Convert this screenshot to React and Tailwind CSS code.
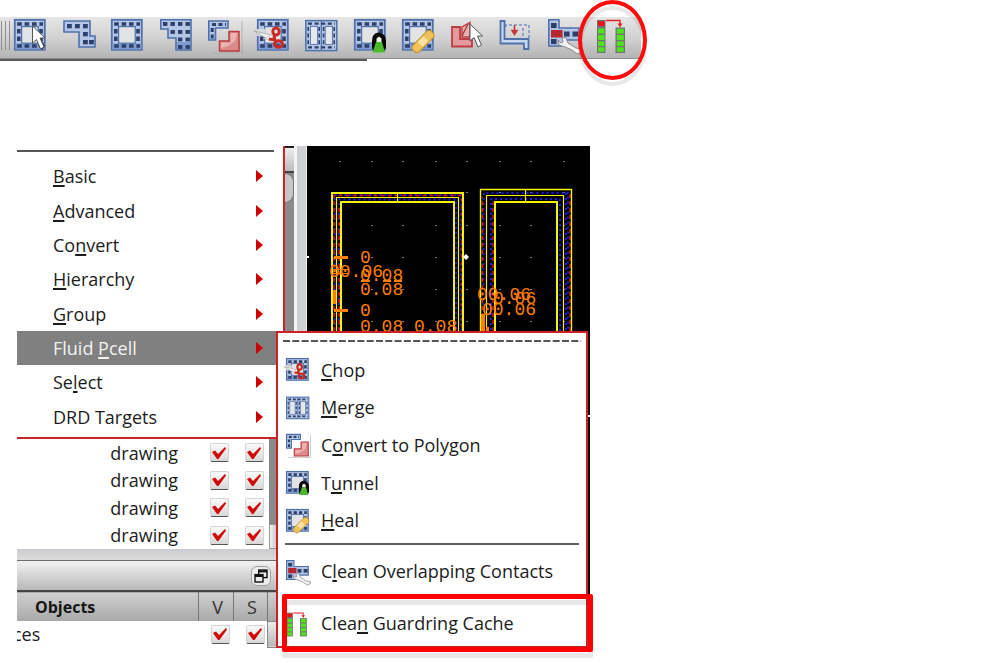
const EDGE = "#4f70ab";
const FILL = "#b4c5e6";
const DARK = "#2c4069";

function Icon({ className = "size-8", children }) {
  return (
    <svg viewBox="0 0 32 32" className={className + " block overflow-visible"} aria-hidden="true">
      {children}
    </svg>
  );
}

function Squares({ points, size = 4.5 }) {
  return points.map(([x, y]) => (
    <rect key={x + "-" + y} x={x} y={y} width={size} height={size - 0.5} fill={DARK} />
  ));
}

function Ring({ hole = "#e2e3e5" }) {
  return (
    <g>
      <rect x="0.8" y="0.8" width="30" height="30" fill={FILL} stroke={EDGE} strokeWidth="1.8" />
      <path d="M1.5 24.5H30.5V30.5H1.5Z" fill="#7f9bd0" />
      <g stroke={DARK} strokeWidth="3.6" strokeDasharray="4.6 2.8" fill="none">
        <path d="M3.2 5H29M3.2 27H29" />
        <path d="M4.8 10V23M27 10V23" />
      </g>
      <rect x="7.6" y="7.6" width="16.6" height="16.6" fill={hole} stroke={EDGE} strokeWidth="1.2" />
    </g>
  );
}

function Pointer({ x, y }) {
  return (
    <path
      transform={`translate(${x} ${y})`}
      d="M0 0V17L4 13.5L8 23L11.5 21L7.5 12H12.5Z"
      fill="#fff"
      stroke="#555"
      strokeWidth="1"
    />
  );
}

const SelectIcon = (p) => (
  <Icon {...p}>
    <Ring />
    <path d="M24 26L28 31L31 27L27 20Z" fill="#222" />
    <Pointer x={18.5} y={7} />
  </Icon>
);

const PathIcon = (p) => (
  <Icon {...p}>
    <path d="M1 2H27V17H32V28H16V13H1Z" fill={FILL} stroke={EDGE} strokeWidth="1.6" />
    <Squares points={[[4, 5], [12, 5], [20, 5], [20, 13], [20, 21], [26, 21]]} size={4.8} />
  </Icon>
);

const RingIcon = (p) => (
  <Icon {...p}>
    <Ring />
  </Icon>
);

const PolygonIcon = (p) => (
  <Icon {...p}>
    <path d="M0.8 0.8H31V31H16V19H8V10H0.8Z" fill={FILL} stroke={EDGE} strokeWidth="1.6" />
    <path d="M17 23H30V30H17Z" fill="#7f9bd0" />
    <Squares
      points={[[3, 3], [10.5, 3], [18, 3], [25.5, 3], [10.5, 11], [18, 11], [25.5, 11], [18, 18.5], [25.5, 18.5], [18, 26], [25.5, 26]]}
      size={4.4}
    />
  </Icon>
);

const ConvertIcon = (p) => (
  <Icon {...p}>
    <path d="M3 34H34V2" stroke="#a9a9a9" strokeWidth="0.8" fill="none" />
    <path d="M0.8 2H20V9H7.5V21H0.8Z" fill={FILL} stroke={EDGE} strokeWidth="1.6" />
    <path d="M4 5.4H18M4.2 9V20" stroke={DARK} strokeWidth="3" strokeDasharray="4 2.5" />
    <path d="M11.5 22H21V12.5H31V32H11.5Z" fill="#dd8a8a" stroke="#b93c42" strokeWidth="1.5" />
    <path d="M13 23.5H22.5V14H29.5L27 22L20 27L13 29Z" fill="#f3c3c3" opacity="0.7" />
  </Icon>
);

const ChopIcon = (p) => (
  <Icon {...p}>
    <Ring />
    <path d="M0 10H8V17H0Z" fill="#dadada" />
    <path d="M-3 12L14 16L18 21L12 21Z" fill="#f5f5f5" stroke="#999" strokeWidth="0.7" />
    <path d="M6 20L17 15L15 20Z" fill="#fff" stroke="#aaa" strokeWidth="0.6" />
    <g fill="none" stroke="#cc2a22" strokeWidth="3">
      <ellipse cx="19" cy="12.5" rx="3.2" ry="3.6" />
      <ellipse cx="21.5" cy="25" rx="4" ry="3.2" />
      <path d="M17 16L18 22M12 20L19 21" />
    </g>
  </Icon>
);

const MergeIcon = (p) => (
  <Icon {...p}>
    <rect x="0.8" y="1.6" width="31" height="30" fill={FILL} stroke={EDGE} strokeWidth="1.5" />
    <path d="M16.3 2V31" stroke={EDGE} strokeWidth="1.2" />
    <g stroke={DARK} strokeWidth="2.4" strokeDasharray="4 2.6">
      <path d="M3 4.6H30M3 28.4H30" />
      <path d="M3.2 8V26M14.2 8V26M18.6 8V26M29.2 8V26" strokeWidth="1.6" />
    </g>
    <rect x="5.4" y="7.4" width="7.2" height="18" fill="#e6e7ea" stroke={EDGE} strokeWidth="0.9" />
    <rect x="20.2" y="7.4" width="7.2" height="18" fill="#e6e7ea" stroke={EDGE} strokeWidth="0.9" />
  </Icon>
);

const TunnelIcon = (p) => (
  <Icon {...p}>
    <Ring />
    <path d="M18 29V22Q18 14 24.5 13.5Q32 14 32 22V29L29 33H20Z" fill="#050505" />
    <path d="M22.5 19.5L25 17.5L27.5 19.5V23H22.5Z" fill="#e8f4e0" />
    <path d="M22 23H28L31 33.5H18.5Z" fill="#4cb82c" />
  </Icon>
);

const HealIcon = (p) => (
  <Icon {...p}>
    <Ring />
    <g transform="rotate(-45 21 22.5)">
      <rect x="8" y="18" width="26" height="9" rx="3.5" fill="#f0c25a" stroke="#c4912c" strokeWidth="1" />
      <rect x="17" y="19" width="8" height="7" fill="#f9e0a6" />
    </g>
  </Icon>
);

const ReshapeIcon = (p) => (
  <Icon {...p}>
    <path d="M1 8H9V20H21V27.5H1Z" fill="#e29a9c" stroke="#bd3d44" strokeWidth="1.8" />
    <path d="M11 18V8L19 3.5V18Z" fill="#e6b4b5" stroke="#bd3d44" strokeWidth="1.4" />
    <path d="M11 17L17 5" stroke="#a83038" strokeWidth="1.2" />
    <Pointer x={19} y={5} />
  </Icon>
);

const StretchIcon = (p) => (
  <Icon {...p}>
    <path d="M7 8V6H30V21" fill="none" stroke="#7896c8" strokeWidth="1.6" strokeDasharray="3 2" />
    <path d="M24 9V21" stroke="#7896c8" strokeWidth="1.6" strokeDasharray="3 2" />
    <path d="M1.5 2H5.5V20H29.5V30H25V24.5H1.5Z" fill="#c9d7ef" stroke={EDGE} strokeWidth="1.8" />
    <path d="M15.5 6V12M13 11.5H18L15.5 15.5Z" fill="#c4393f" stroke="#c4393f" strokeWidth="1.6" />
  </Icon>
);

const ContactsIcon = (p) => (
  <Icon {...p}>
    <path d="M0.8 0.8H11V9H31V21H18V27H0.8Z" fill={FILL} stroke={EDGE} strokeWidth="1.6" />
    <Squares points={[[3, 4], [16, 12.5], [24.5, 12.5], [3, 20]]} size={5.6} />
    <rect x="3" y="11" width="11.5" height="7.5" fill="#b5262d" />
    <path
      d="M10 21L13 24L15 23L14 18.5L18 19L20 24L28 29L34 30V33L29 35L24 31L17 28L11 26Z"
      fill="#f1f1f1"
      stroke="#8b8b8b"
      strokeWidth="1"
    />
  </Icon>
);

const CacheIcon = (p) => (
  <Icon {...p}>
    <rect x="1" y="1" width="8.5" height="33" fill="#6f7472" />
    <rect x="19.5" y="8.5" width="9.5" height="25.5" fill="#6f7472" />
    <rect x="2" y="2.2" width="6.5" height="4.8" fill="#ea1212" />
    <g fill="#4fe31c">
      <rect x="2" y="9.5" width="6.5" height="5" />
      <rect x="2" y="16" width="6.5" height="5" />
      <rect x="2" y="22.3" width="6.5" height="4.6" />
      <rect x="2" y="28.2" width="6.5" height="4.6" />
      <rect x="20.8" y="9.8" width="7" height="4.8" />
      <rect x="20.8" y="16" width="7" height="5" />
      <rect x="20.8" y="22.3" width="7" height="4.6" />
      <rect x="20.8" y="28.2" width="7" height="4.6" />
    </g>
    <path d="M10 1.5H24V5" fill="none" stroke="#e02222" strokeWidth="1.4" />
    <path d="M21.5 4.5H26.5L24 8.5Z" fill="#e02222" />
  </Icon>
);

const tools = [
  ["Select", SelectIcon],
  ["Path", PathIcon],
  ["Ring", RingIcon],
  ["Polygon", PolygonIcon],
  ["Convert to Polygon", ConvertIcon],
  ["Chop", ChopIcon],
  ["Merge", MergeIcon],
  ["Tunnel", TunnelIcon],
  ["Heal", HealIcon],
  ["Reshape", ReshapeIcon],
  ["Stretch", StretchIcon],
  ["Clean Overlapping Contacts", ContactsIcon],
  ["Clean Guardring Cache", CacheIcon],
];

function Toolbar() {
  return (
    <header className="relative mt-[17px] w-[641px]">
      <div className="flex h-[42px] items-start border-b border-[#8c8c8c] bg-linear-to-b from-[#e6e6e6] via-[#d2d2d2] to-[#b4b4b4] pt-0.5">
        <div className="mt-0.5 flex h-[29px] w-[14px] shrink-0 gap-[3px] pl-px">
          <span className="w-px bg-[#8f8f8f]" />
          <span className="w-px bg-[#8f8f8f]" />
          <span className="w-px bg-[#8f8f8f]" />
        </div>
        <div className="mr-[13px] flex flex-1 justify-between">
          {tools.map(([name, Glyph]) => (
            <button key={name} type="button" aria-label={name} className="block">
              <Glyph />
            </button>
          ))}
        </div>
      </div>
      <div className="h-0.5 w-[367px] bg-[#5a5a5a]" />
      <div className="absolute -top-[17px] left-[578px] h-20 w-[69px] rounded-[50%] border-4 border-[#fb0d0d] drop-shadow-[0_6px_0_rgba(0,0,0,0.09)]" />
    </header>
  );
}

function Mnemonic({ text, at }) {
  if (at < 0) return <span>{text}</span>;
  return (
    <span className="whitespace-nowrap">
      {text.slice(0, at)}
      <span className="underline decoration-2 underline-offset-2 [text-decoration-skip-ink:none]">{text[at]}</span>
      {text.slice(at + 1)}
    </span>
  );
}

const menuItems = [
  ["Basic", 0],
  ["Advanced", 0],
  ["Convert", 2],
  ["Hierarchy", 0],
  ["Group", 0],
  ["Fluid Pcell", 6],
  ["Select", 2],
  ["DRD Targets", -1],
];

function EditMenu() {
  return (
    <nav className="w-[268px] border-r-2 border-b-2 border-[#cc2229] bg-white pt-1">
      <hr className="mr-[9px] border-t-2 border-[#555]" />
      <ul className="mt-[7px] mb-[3px] grid h-[275px] grid-rows-8">
        {menuItems.map(([text, at]) => (
          <li key={text}>
            <button
              type="button"
              className={
                "flex h-full w-full items-center justify-between pr-5 pl-9 text-left " +
                (text === "Fluid Pcell" ? "bg-[#808080] text-[#f2f2f2]" : "text-[#1c1c1c]")
              }
            >
              <Mnemonic text={text} at={at} />
              <svg viewBox="0 0 7 12" className="h-3 w-[7px]" aria-hidden="true">
                <path d="M0 0L7 6L0 12Z" fill="#cc0000" />
              </svg>
            </button>
          </li>
        ))}
      </ul>
    </nav>
  );
}

function Check({ label }) {
  return (
    <span className="grid size-5 place-items-center">
      <input
        type="checkbox"
        aria-label={label}
        defaultChecked
        className="peer col-start-1 row-start-1 size-[19px] appearance-none rounded-xs border border-[#d4d4d4] border-b-[#555] bg-linear-to-b from-[#fafafa] to-[#d8d8d8]"
      />
      <svg
        viewBox="0 0 14 12"
        className="pointer-events-none invisible col-start-1 row-start-1 h-3 w-[14px] peer-checked:visible"
        aria-hidden="true"
      >
        <path d="M0 5L3 3.5L6 7L13 0L14 1.5L6.5 12H5Z" fill="#d00808" />
      </svg>
    </span>
  );
}

function LayerPanel() {
  return (
    <div className="flex h-[110px] w-[260px] bg-white">
      <table className="w-[252px] table-fixed border-collapse">
        <tbody>
          {[0, 1, 2, 3].map((row) => (
            <tr key={row} className="h-[27px]">
              <td className="p-0 pr-[9px] text-right leading-[26px]">drawing</td>
              <td className="w-[46px] p-0 pl-[22px]">
                <Check label={`Layer ${row + 1} visible`} />
              </td>
              <td className="w-9 p-0 pl-[11px]">
                <Check label={`Layer ${row + 1} selectable`} />
              </td>
            </tr>
          ))}
        </tbody>
      </table>
      <div className="flex flex-1 flex-col">
        <div className="flex-1 bg-[#8a8a8a]" />
        <div className="h-[25px] border border-r-0 border-[#999] bg-linear-to-r from-[#f0f0f0] to-[#c4c4c4]" />
      </div>
    </div>
  );
}

function ObjectsPanel() {
  return (
    <div className="w-[260px]">
      <div className="h-[12px] border-b border-[#6d6d6d] bg-linear-to-b from-[#c9cbcf] to-[#dcdcdc]" />
      <div className="flex h-[29px] items-center justify-end bg-linear-to-b from-[#f2f2f2] to-[#b9b9b9] pr-1.5">
        <button
          type="button"
          aria-label="Float panel"
          className="grid size-5 place-items-center rounded-md border border-[#a0a0a0] bg-[#ececec]"
        >
          <svg viewBox="0 0 14 14" className="size-[14px]" aria-hidden="true">
            <g fill="#ececec" stroke="#111" strokeWidth="1.4">
              <rect x="4.7" y="1" width="8.3" height="7.6" />
              <path d="M4.7 2.4H13" strokeWidth="2" />
              <rect x="1" y="5.6" width="8" height="7.4" />
              <path d="M1 7H9" strokeWidth="2" />
            </g>
          </svg>
        </button>
      </div>
      <table className="w-[260px] table-fixed border-collapse">
        <thead>
          <tr className="h-[30px] border-t-2 border-[#444] bg-linear-to-b from-[#cfcfcf] to-[#a9a9a9]">
            <th className="border-r border-[#777] p-0 pl-[18px] text-left text-base leading-6 font-bold text-[#151515]">
              Objects
            </th>
            <th className="w-[35px] border-r border-[#777] p-0 pl-1 leading-6 font-normal text-[#333]">V</th>
            <th className="w-[34px] border-r border-[#777] p-0 pl-1 leading-6 font-normal text-[#333]">S</th>
            <th className="w-[10px] p-0" />
          </tr>
        </thead>
        <tbody>
          <tr className="h-[26px]">
            <td className="p-0 leading-[25px]">
              <span className="flex w-[70px] overflow-hidden">
                <span className="-ml-1">ces</span>
              </span>
            </td>
            <td className="p-0 pl-3">
              <Check label="Instances visible" />
            </td>
            <td className="p-0 pl-3">
              <Check label="Instances selectable" />
            </td>
            <td className="border border-r-0 border-[#888] bg-linear-to-b from-[#eee] to-[#b5b5b5] p-0" />
          </tr>
        </tbody>
      </table>
    </div>
  );
}

function ScrollStrip() {
  return (
    <div className="flex h-[190px] w-[22px] shrink-0">
      <div className="w-[9px] bg-[#8a8a8a]">
        <div className="h-[27px] border-y-2 border-t-[#222] border-b-[#444] bg-linear-to-b from-[#eee] to-[#bbb]" />
        <div className="h-[30px] rounded-r-full border border-l-0 border-[#777] bg-[#c6c6c6]" />
      </div>
      <div className="w-[3px] bg-[#f4f4f4]" />
      <div className="flex-1 border-r border-[#eee] bg-[#cfd0d3]" />
    </div>
  );
}

const gridX = [339, 371, 402, 435, 466, 499, 530, 563];
const gridY = [161, 192, 225, 257, 289, 321];

function LayoutCanvas() {
  return (
    <svg
      viewBox="307 146 283 502"
      className="block h-[502px] w-[283px] shrink-0 bg-black"
      role="img"
      aria-label="Layout canvas with two guard rings"
    >
      {gridY.map((y) =>
        gridX.map((x) => <rect key={x + "-" + y} x={x} y={y} width="2" height="1" fill="#7d7f90" />),
      )}
      <g fill="none" strokeWidth="2" stroke="#1a1ae6" strokeDasharray="2 3">
        <path d="M334.5 345V195H461V345M339 345V199.5H456V345" />
        <path d="M483.5 345V193H568V345M491 345V199H560V345M566 345V193" />
      </g>
      <g fill="none" stroke="#e01414" strokeDasharray="4 3" strokeWidth="1.4">
        <path d="M334 345V195.5H462V345M339.3 345V205" />
        <path d="M482.5 345V197M570 345V193M493 345V202" />
      </g>
      <g fill="none" stroke="#f4f400">
        <path d="M332 345V193H463V345" strokeWidth="2" />
        <path d="M336.5 345V197.5H458.5V345M397.5 192V202" strokeWidth="1.2" />
        <path d="M341 345V202H454V345" strokeWidth="2" />
        <path d="M480.5 345V189.5H571.5V345" strokeWidth="1.4" />
        <path d="M486.5 345V195.5H563.5V345M525.5 189V202" strokeWidth="1.2" />
        <path d="M495 345V202H557V345" strokeWidth="2" />
      </g>
      <g fill="#fff">
        <path d="M466 254L469 257L466 260L463 257Z" />
        <rect x="307" y="256" width="2" height="2" />
        <rect x="588" y="415" width="2" height="2" />
      </g>
      <g fill="#ff7f00">
        <rect x="334" y="256" width="14" height="3" />
        <rect x="334" y="309" width="14" height="3" />
        <rect x="333" y="290" width="3" height="14" />
        <rect x="333" y="269" width="15" height="1" />
        <rect x="333" y="273" width="15" height="1" />
        <rect x="481" y="314" width="4" height="18" />
        <rect x="486" y="327" width="3" height="6" />
        <rect x="361" y="280" width="9" height="2" />
        <rect x="383" y="280" width="8" height="2" />
        <rect x="394" y="280" width="8" height="2" />
      </g>
      <g fill="#ff7f00" className="font-['Liberation_Mono',monospace] text-[18px]">
        <text x="360" y="263">0</text>
        <text x="329" y="277">00.06</text>
        <text x="360" y="281">0.08</text>
        <text x="360" y="295">0.08</text>
        <text x="360" y="316">0</text>
        <text x="360" y="332">0.08 0.08</text>
        <text x="477" y="300">00.06</text>
        <text x="493" y="304">0.06</text>
        <text x="482" y="315">00.06</text>
      </g>
    </svg>
  );
}

function SubItem({ text, at, glyph: Glyph }) {
  return (
    <button type="button" className="flex h-full w-full items-center gap-3 pl-2 text-left text-[#1c1c1c]">
      <Glyph className="size-[23px]" />
      <Mnemonic text={text} at={at} />
    </button>
  );
}

const fluidItems = [
  ["Chop", 0, ChopIcon],
  ["Merge", 0, MergeIcon],
  ["Convert to Polygon", 1, ConvertIcon],
  ["Tunnel", 1, TunnelIcon],
  ["Heal", 0, HealIcon],
];

function FluidMenu() {
  return (
    <div className="absolute top-[185px] left-[259px] w-[312px] border-2 border-[#cc1f26] bg-white pb-1">
      <svg className="mt-[7px] ml-[5px] block h-0.5 w-[298px]" aria-hidden="true">
        <path d="M0 1H298" stroke="#555" strokeWidth="2" strokeDasharray="7 2.3" />
      </svg>
      <ul className="mt-[9px] grid h-[188px] grid-rows-5">
        {fluidItems.map(([text, at, glyph]) => (
          <li key={text}>
            <SubItem text={text} at={at} glyph={glyph} />
          </li>
        ))}
      </ul>
      <hr className="mx-[7px] mt-1 border-t-2 border-[#59605f]" />
      <div className="mt-[7px] h-[38px]">
        <SubItem text="Clean Overlapping Contacts" at={1} glyph={ContactsIcon} />
      </div>
      <div className="relative mt-[14px] h-[38px]">
        <SubItem text="Clean Guardring Cache" at={4} glyph={CacheIcon} />
        <div className="pointer-events-none absolute -top-[10px] left-1 h-[58px] w-[311px] rounded-xs border-[5px] border-[#ff0000] drop-shadow-[0_6px_0_rgba(0,0,0,0.09)]" />
      </div>
    </div>
  );
}

export default function App() {
  return (
    <div className="min-h-screen bg-white font-['Open_Sans','Noto_Sans',sans-serif] text-[18px] leading-6 text-[#1c1c1c]">
      <div className="flow-root">
        <Toolbar />
      </div>
      <main className="relative mt-[85px] ml-[17px] flex items-start">
        <div className="w-[268px] shrink-0">
          <EditMenu />
          <LayerPanel />
          <ObjectsPanel />
        </div>
        <ScrollStrip />
        <LayoutCanvas />
        <FluidMenu />
      </main>
    </div>
  );
}
